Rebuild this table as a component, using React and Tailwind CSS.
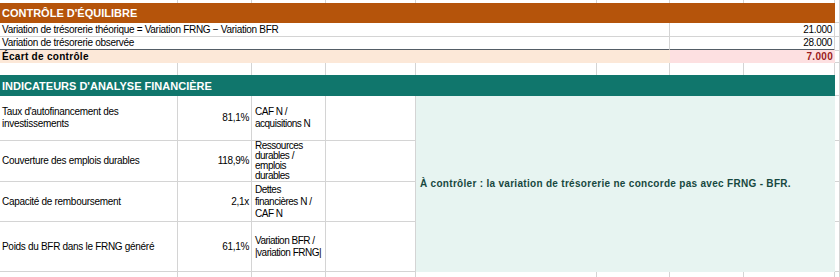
import React from "react";

const COLS = "grid grid-cols-[178px_74px_74px_90px_181px_73px_74px_91px_1fr]";
const line = "border-[#d4d4d4]";

const indicators = [
  { label: "Taux d'autofinancement des investissements", value: "81,1%", formula: "CAF N / acquisitions N", h: "leading-[12px]" },
  { label: "Couverture des emplois durables", value: "118,9%", formula: "Ressources durables / emplois durables", h: "leading-[10px] max-w-[58px]" },
  { label: "Capacité de remboursement", value: "2,1x", formula: "Dettes financières N / CAF N", h: "leading-[12px]" },
  { label: "Poids du BFR dans le FRNG généré", value: "61,1%", formula: "Variation BFR / |variation FRNG|", h: "leading-[12px]" },
];

const EmptyCells = ({ count, className = "" }) =>
  Array.from({ length: count }).map((_, i) => (
    <div key={i} className={`border-r ${line} ${className}`} />
  ));

const App = () => {
  return (
    <div className="h-[277px] w-[840px] overflow-hidden bg-white font-['Liberation_Sans',Arial,sans-serif] text-[10px] leading-[12px] tracking-[-0.3px] text-black">
      {/* top partial row */}
      <div className={`${COLS} h-[3px]`}>
        <EmptyCells count={9} />
      </div>

      {/* CONTROLE D'EQUILIBRE */}
      <div className={`${COLS} h-[20px]`}>
        <div className="col-span-8 flex items-center bg-[#b5540b] px-[2px] text-[11px] font-bold tracking-[0px] text-white">
          CONTRÔLE D'ÉQUILIBRE
        </div>
        <div className={`border-r border-b ${line}`} />
      </div>

      <div className={`${COLS} h-[14px]`}>
        <div className={`col-span-6 flex items-center border-r border-b px-[2px] ${line}`}>
          Variation de trésorerie théorique = Variation FRNG − Variation BFR
        </div>
        <div className={`col-span-2 flex items-center justify-end border-r border-b px-[2px] ${line}`}>21.000</div>
        <div className={`border-r border-b ${line}`} />
      </div>

      <div className={`${COLS} h-[13px]`}>
        <div className={`col-span-6 flex items-center border-r border-b-2 border-b-[#545d66] px-[2px] ${line}`}>
          Variation de trésorerie observée
        </div>
        <div className={`col-span-2 flex items-center justify-end border-r border-b-2 border-b-[#545d66] px-[2px] ${line}`}>
          28.000
        </div>
        <div className={`border-r border-b ${line}`} />
      </div>

      <div className={`${COLS} h-[13px]`}>
        <div className="col-span-6 flex items-center bg-[#fce8d8] px-[2px] font-bold tracking-[0.3px]">Écart de contrôle</div>
        <div className="col-span-2 flex items-center justify-end bg-[#fde0e1] px-[2px] font-bold tracking-[0.3px] text-[#9b1c1c]">
          7.000
        </div>
        <div className={`border-r border-b ${line}`} />
      </div>

      <div className={`${COLS} h-[12px]`}>
        <EmptyCells count={9} />
      </div>

      {/* INDICATEURS */}
      <div className={`${COLS} h-[21px]`}>
        <div className="col-span-8 flex items-center bg-[#10766c] px-[2px] text-[11px] font-bold tracking-[0px] text-white">
          INDICATEURS D'ANALYSE FINANCIÈRE
        </div>
        <div className={`border-r border-b ${line}`} />
      </div>

      <div className={`${COLS} grid-rows-[45px_41px_40px_50px_10px]`}>
        {indicators.map((row, i) => (
          <React.Fragment key={row.label}>
            <div className={`col-start-1 flex items-center border-r border-b px-[2px] ${line}`} style={{ gridRow: i + 1 }}>
              {row.label}
            </div>
            <div className={`col-start-2 flex items-center justify-end border-r border-b px-[2px] ${line}`} style={{ gridRow: i + 1 }}>
              {row.value}
            </div>
            <div
              className={`col-start-3 flex items-center overflow-hidden border-r border-b pl-[3px] tracking-[-0.5px] ${line}`}
              style={{ gridRow: i + 1 }}
            >
              <span className={row.h}>{row.formula}</span>
            </div>
            <div className={`col-start-4 border-r border-b ${line}`} style={{ gridRow: i + 1 }} />
            <div className={`col-start-9 border-r border-b ${line}`} style={{ gridRow: i + 1 }} />
          </React.Fragment>
        ))}
        <div className="col-span-4 col-start-5 row-span-4 row-start-1 flex items-center bg-[#e7f4f1] px-[4px] font-bold tracking-[0.3px] text-[#17483f]">
          À contrôler : la variation de trésorerie ne concorde pas avec FRNG - BFR.
        </div>
        <EmptyCells count={9} className="row-start-5" />
      </div>
    </div>
  );
};

export default App;
